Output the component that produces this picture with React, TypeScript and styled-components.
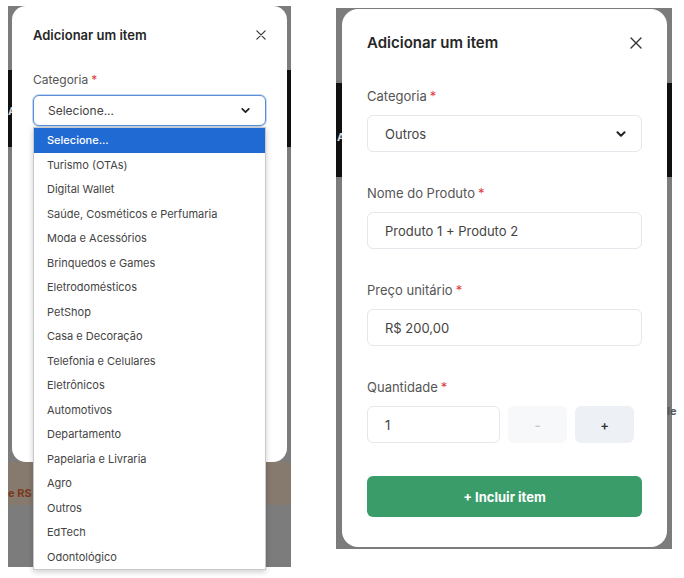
import React from 'react'
import styled, { createGlobalStyle } from 'styled-components'

const GlobalStyle = createGlobalStyle`
  body {
    margin: 0;
    background: #ffffff;
    font-family: Inter, "Noto Sans", Arial, sans-serif;
    color: #333;
  }
`

const Page = styled.div`
  display: flex;
  align-items: flex-start;
  gap: 45px;
  padding: 6px 0 0 8px;
  height: 578px;
  box-sizing: border-box;
  overflow: hidden;
`

const Backdrop = styled.div<{ $w: number; $h: number; $top: number; $pad: string; $bg: string }>`
  position: relative;
  width: ${(p) => p.$w}px;
  height: ${(p) => p.$h}px;
  margin-top: ${(p) => p.$top}px;
  padding: ${(p) => p.$pad};
  box-sizing: border-box;
  background: ${(p) => p.$bg};
`

const BehindText = styled.span<{ $x: number; $y: number; $color?: string }>`
  position: absolute;
  left: ${(p) => p.$x}px;
  top: ${(p) => p.$y}px;
  font-size: 11px;
  font-weight: 700;
  color: ${(p) => p.$color || '#3a3a3a'};
`

const Modal = styled.div<{ $pad: string; $radius: number }>`
  position: relative;
  height: 100%;
  box-sizing: border-box;
  background: #fff;
  border-radius: ${(p) => p.$radius}px;
  padding: ${(p) => p.$pad};
  display: flex;
  flex-direction: column;
`

const Header = styled.div<{ $size: number }>`
  display: flex;
  align-items: center;
  justify-content: space-between;
  font-size: ${(p) => p.$size}px;
  line-height: 20px;
  font-weight: 600;
  color: #262626;
`

const CloseIcon: React.FC<{ size: number }> = ({ size }) => (
  <svg width={size} height={size} viewBox="0 0 12 12" fill="none">
    <path d="M1 1 L11 11 M11 1 L1 11" stroke="#333" strokeWidth="1.4" strokeLinecap="round" />
  </svg>
)

const Chevron: React.FC<{ size: number }> = ({ size }) => (
  <svg width={size} height={size} viewBox="0 0 10 10" fill="none">
    <path d="M2 3.5 L5 6.5 L8 3.5" stroke="#222" strokeWidth="1.6" strokeLinecap="round" strokeLinejoin="round" />
  </svg>
)

const Field = styled.div<{ $gap: number; $mt: number }>`
  display: flex;
  flex-direction: column;
  flex-shrink: 0;
  gap: ${(p) => p.$gap}px;
  margin-top: ${(p) => p.$mt}px;
`

const Label = styled.label<{ $size: number }>`
  font-size: ${(p) => p.$size}px;
  line-height: 18px;
  color: #555;
`

const Req = styled.span`
  color: #e03a3a;
  margin-left: 3px;
`

const Box = styled.div<{ $h: number; $size: number; $pl: number; $focus?: boolean }>`
  display: flex;
  align-items: center;
  justify-content: space-between;
  flex-shrink: 0;
  height: ${(p) => p.$h}px;
  box-sizing: border-box;
  padding: 0 14px 0 ${(p) => p.$pl}px;
  border: 1px solid ${(p) => (p.$focus ? '#5a8fd8' : '#e4e7eb')};
  box-shadow: ${(p) => (p.$focus ? '0 0 0 1px rgba(90,143,216,0.35)' : 'none')};
  border-radius: 6px;
  background: #fff;
  font-size: ${(p) => p.$size}px;
  color: #444;
`

const Dropdown = styled.ul`
  position: absolute;
  left: 21px;
  top: 121px;
  width: 233px;
  margin: 0;
  padding: 0;
  list-style: none;
  background: #fff;
  border: 1px solid #c9c9c9;
  box-shadow: 0 2px 6px rgba(0, 0, 0, 0.2);
  box-sizing: border-box;
`

const Option = styled.li<{ $active?: boolean }>`
  height: 24.5px;
  display: flex;
  align-items: center;
  padding-left: 13px;
  font-size: 11px;
  color: ${(p) => (p.$active ? '#fff' : '#444')};
  background: ${(p) => (p.$active ? '#1f6ad3' : 'transparent')};
  font-weight: ${(p) => (p.$active ? 500 : 400)};
`

const QtyRow = styled.div`
  display: flex;
  align-items: stretch;
  gap: 8px;
  height: 37px;
  padding-right: 7px;
`

const QtyInput = styled(Box)`
  flex: 0 0 133px;
`

const StepButton = styled.button<{ $bg: string; $color: string }>`
  flex: 0 0 59px;
  border: none;
  border-radius: 6px;
  background: ${(p) => p.$bg};
  color: ${(p) => p.$color};
  font-family: inherit;
  font-size: 13px;
  font-weight: 600;
`

const Submit = styled.button`
  margin-top: 33px;
  height: 41px;
  flex-shrink: 0;
  border: none;
  border-radius: 6px;
  background: #3a9d69;
  color: #fff;
  font-family: inherit;
  font-size: 13px;
  font-weight: 700;
`

const categories = [
  'Selecione...',
  'Turismo (OTAs)',
  'Digital Wallet',
  'Saúde, Cosméticos e Perfumaria',
  'Moda e Acessórios',
  'Brinquedos e Games',
  'Eletrodomésticos',
  'PetShop',
  'Casa e Decoração',
  'Telefonia e Celulares',
  'Eletrônicos',
  'Automotivos',
  'Departamento',
  'Papelaria e Livraria',
  'Agro',
  'Outros',
  'EdTech',
  'Odontológico',
]

const leftBg =
  'linear-gradient(to bottom, #7c7c7c 0, #7c7c7c 64px, #101010 64px, #101010 141px, #7c7c7c 141px, #7c7c7c 456px, #86796d 456px, #86796d 499px, #7c7c7c 499px)'
const rightBg =
  'linear-gradient(to bottom, #7c7c7c 0, #7c7c7c 75px, #101010 75px, #101010 169px, #7c7c7c 169px)'

const App: React.FC = () => {
  return (
    <>
      <GlobalStyle />
      <Page>
        <Backdrop $w={283} $h={561} $top={0} $pad="0 4px 105px 4px" $bg={leftBg}>
          <BehindText $x={0} $y={98} $color="#ddd">A</BehindText>
          <BehindText $x={0} $y={480} $color="#7a3a1c">e RS</BehindText>
          <Modal $pad="19px 21px" $radius={14}>
            <Header $size={13}>
              Adicionar um item
              <CloseIcon size={10} />
            </Header>
            <Field $gap={6} $mt={26}>
              <Label $size={12}>
                Categoria<Req>*</Req>
              </Label>
              <Box $h={31} $size={12} $pl={14} $focus>
                Selecione...
                <Chevron size={11} />
              </Box>
            </Field>
            <Dropdown>
              {categories.map((c, i) => (
                <Option key={c} $active={i === 0}>
                  {c}
                </Option>
              ))}
            </Dropdown>
          </Modal>
        </Backdrop>

        <Backdrop $w={336} $h={541} $top={2} $pad="1px 5px 2px 6px" $bg={rightBg}>
          <BehindText $x={1} $y={122} $color="#ddd">A</BehindText>
          <BehindText $x={331} $y={396} $color="#555">le</BehindText>
          <Modal $pad="24px 25px 30px 25px" $radius={16}>
            <Header $size={15}>
              Adicionar um item
              <CloseIcon size={12} />
            </Header>
            <Field $gap={10} $mt={34}>
              <Label $size={13}>
                Categoria<Req>*</Req>
              </Label>
              <Box $h={37} $size={13} $pl={17}>
                Outros
                <Chevron size={12} />
              </Box>
            </Field>
            <Field $gap={10} $mt={32}>
              <Label $size={13}>
                Nome do Produto<Req>*</Req>
              </Label>
              <Box $h={37} $size={13} $pl={17}>
                Produto 1 + Produto 2
              </Box>
            </Field>
            <Field $gap={10} $mt={32}>
              <Label $size={13}>
                Preço unitário<Req>*</Req>
              </Label>
              <Box $h={37} $size={13} $pl={17}>
                R$ 200,00
              </Box>
            </Field>
            <Field $gap={10} $mt={32}>
              <Label $size={13}>
                Quantidade<Req>*</Req>
              </Label>
              <QtyRow>
                <QtyInput $h={37} $size={13} $pl={17}>
                  1
                </QtyInput>
                <StepButton $bg="#f7f8fa" $color="#c4c8cf">-</StepButton>
                <StepButton $bg="#edf1f6" $color="#333">+</StepButton>
              </QtyRow>
            </Field>
            <Submit>+ Incluir item</Submit>
          </Modal>
        </Backdrop>
      </Page>
    </>
  )
}

export default App
